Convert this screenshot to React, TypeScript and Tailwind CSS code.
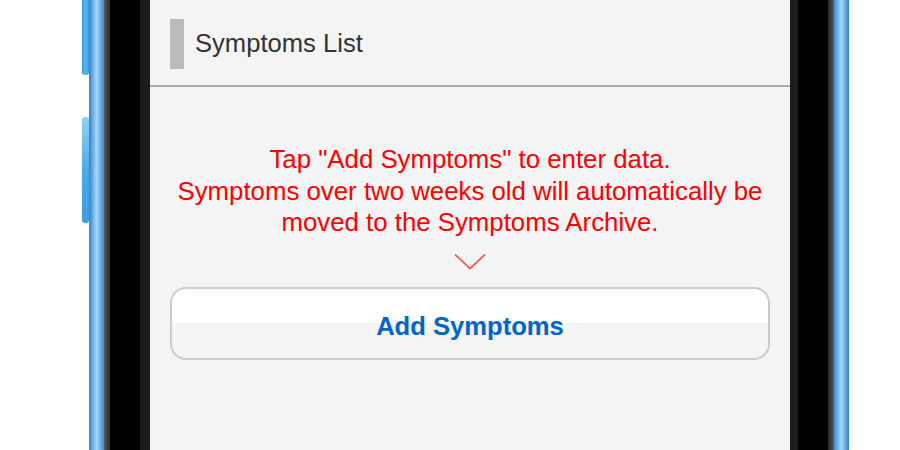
export default function App() {
  return (
    <div className="flex h-[450px] w-[900px] overflow-hidden bg-white font-['Liberation_Sans',Arial,sans-serif]">
      <div className="w-[82px] shrink-0" />
      {/* side buttons */}
      <div className="flex w-[7px] shrink-0 flex-col">
        <div className="h-[75px] rounded-b-[3px] bg-gradient-to-r from-[#3d9be0] via-[#5ab8ea] to-[#3d9be0]" />
        <div className="mt-[42px] h-[106px] rounded-[3px] bg-gradient-to-b from-[#8fd2f5] via-[#4aaae6] to-[#3f9fe0]" />
      </div>
      {/* left frame */}
      <div className="w-[15px] shrink-0 bg-gradient-to-r from-[#2f80d2] via-[#a3d9f7] to-[#3a8cd8]" />
      <div className="w-[6px] shrink-0 bg-gradient-to-r from-[#5a5a5a] to-[#2a2a2a]" />
      <div className="w-[30px] shrink-0 bg-black" />
      <div className="w-[10px] shrink-0 bg-[#1c1c1c]" />

      {/* screen */}
      <div className="flex w-[640px] shrink-0 flex-col bg-[#f4f4f4]">
        <div className="flex h-[87px] shrink-0 items-start border-b-2 border-[#aaaaaa] pl-[20px] pt-[19px]">
          <div className="h-[50px] w-[14px] bg-[#bbbbbb]" />
          <div className="ml-[11px] mt-[8px] text-[25.6px] leading-[32px] text-[#333333]">Symptoms List</div>
        </div>

        <div className="mt-[57px] text-center text-[25.8px] leading-[31.5px] text-[#ff0000]">
          <div>Tap "Add Symptoms" to enter data.</div>
          <div>Symptoms over two weeks old will automatically be</div>
          <div>moved to the Symptoms Archive.</div>
        </div>

        <div className="mt-[14px] flex justify-center">
          <svg width="32" height="17" viewBox="0 0 32 17" fill="none">
            <path d="M1 1.5 L16 15.5 L31 1.5" stroke="#ff4d4d" strokeWidth="1.7" />
          </svg>
        </div>

        <div className="mx-[20px] mt-[17px] flex h-[73px] items-center justify-center rounded-[16px] border-2 border-[#cccccc] bg-[linear-gradient(to_bottom,#ffffff_50%,#f4f4f4_50%)] pt-[6px]">
          <span className="text-[25.6px] font-bold leading-[32px] text-[#0066cc]">Add Symptoms</span>
        </div>
      </div>

      {/* right frame */}
      <div className="w-[8px] shrink-0 bg-[#1c1c1c]" />
      <div className="w-[30px] shrink-0 bg-black" />
      <div className="w-[6px] shrink-0 bg-gradient-to-r from-[#2a2a2a] to-[#5a5a5a]" />
      <div className="w-[15px] shrink-0 bg-gradient-to-r from-[#3a8cd8] via-[#a3d9f7] to-[#2f80d2]" />
      <div className="flex-1" />
    </div>
  );
}
